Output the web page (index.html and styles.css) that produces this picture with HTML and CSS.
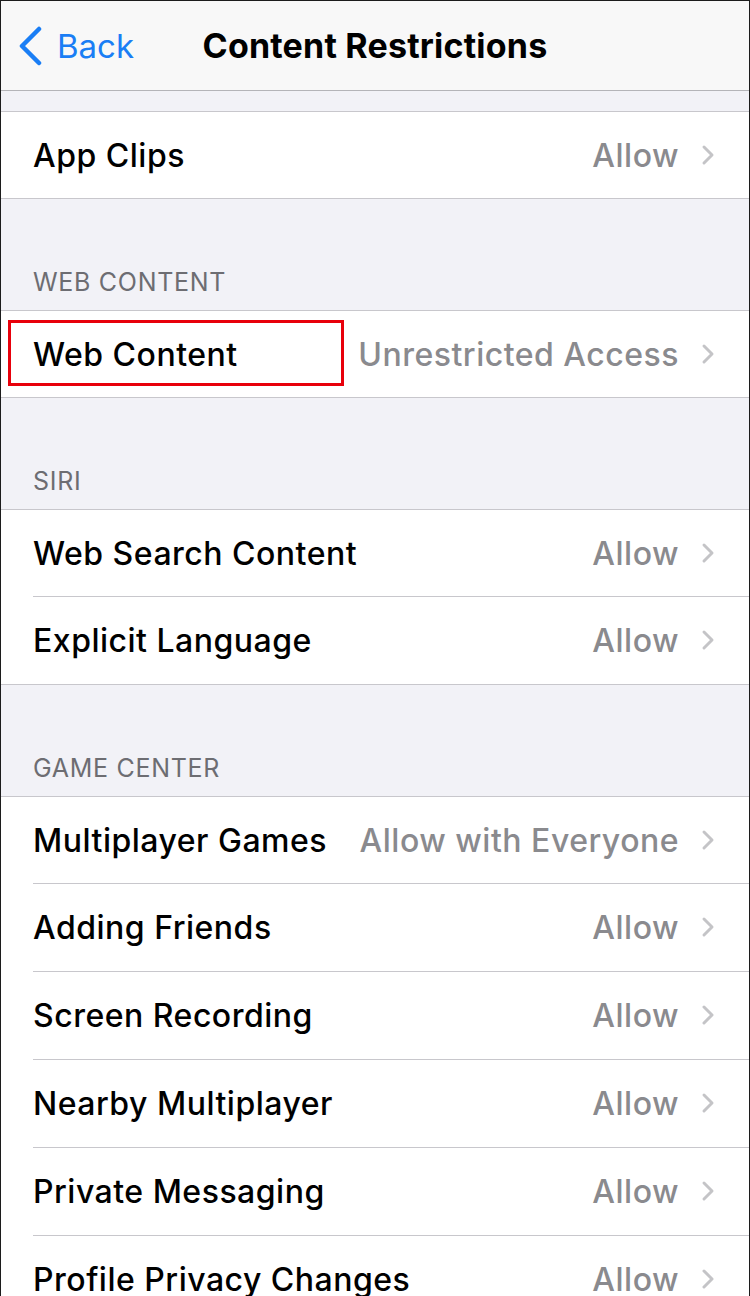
FILE: index.html
```html
<!DOCTYPE html>
<html lang="en">
<head>
    <meta charset="UTF-8">
    <meta name="viewport" content="width=device-width, initial-scale=1.0">
    <title>Content Restrictions</title>
    <link rel="stylesheet" href="styles.css">
</head>
<body>
    <div class="screen">
        <header class="navbar">
            <a class="back">
                <svg class="back-icon" width="26" height="40" viewBox="0 0 26 40">
                    <path d="M22 3 L5 20 L22 37" fill="none" stroke="#1a7ef5" stroke-width="4.5" stroke-linecap="round" stroke-linejoin="round"/>
                </svg>
                <span>Back</span>
            </a>
            <h1>Content Restrictions</h1>
        </header>

        <div class="spacer"></div>
        <div class="group">
            <div class="row">
                <span class="label">App Clips</span>
                <span class="value">Allow</span>
                <svg class="chev" width="14" height="22" viewBox="0 0 14 22"><path d="M3 3 L11 11 L3 19" fill="none" stroke="#c4c4c7" stroke-width="3" stroke-linecap="round" stroke-linejoin="round"/></svg>
            </div>
        </div>

        <div class="section-title">WEB CONTENT</div>
        <div class="group">
            <div class="row">
                <span class="label">Web Content</span>
                <span class="value">Unrestricted Access</span>
                <svg class="chev" width="14" height="22" viewBox="0 0 14 22"><path d="M3 3 L11 11 L3 19" fill="none" stroke="#c4c4c7" stroke-width="3" stroke-linecap="round" stroke-linejoin="round"/></svg>
                <div class="highlight"></div>
            </div>
        </div>

        <div class="section-title">SIRI</div>
        <div class="group">
            <div class="row">
                <span class="label">Web Search Content</span>
                <span class="value">Allow</span>
                <svg class="chev" width="14" height="22" viewBox="0 0 14 22"><path d="M3 3 L11 11 L3 19" fill="none" stroke="#c4c4c7" stroke-width="3" stroke-linecap="round" stroke-linejoin="round"/></svg>
            </div>
            <div class="row">
                <span class="label">Explicit Language</span>
                <span class="value">Allow</span>
                <svg class="chev" width="14" height="22" viewBox="0 0 14 22"><path d="M3 3 L11 11 L3 19" fill="none" stroke="#c4c4c7" stroke-width="3" stroke-linecap="round" stroke-linejoin="round"/></svg>
            </div>
        </div>

        <div class="section-title">GAME CENTER</div>
        <div class="group">
            <div class="row">
                <span class="label">Multiplayer Games</span>
                <span class="value">Allow with Everyone</span>
                <svg class="chev" width="14" height="22" viewBox="0 0 14 22"><path d="M3 3 L11 11 L3 19" fill="none" stroke="#c4c4c7" stroke-width="3" stroke-linecap="round" stroke-linejoin="round"/></svg>
            </div>
            <div class="row">
                <span class="label">Adding Friends</span>
                <span class="value">Allow</span>
                <svg class="chev" width="14" height="22" viewBox="0 0 14 22"><path d="M3 3 L11 11 L3 19" fill="none" stroke="#c4c4c7" stroke-width="3" stroke-linecap="round" stroke-linejoin="round"/></svg>
            </div>
            <div class="row">
                <span class="label">Screen Recording</span>
                <span class="value">Allow</span>
                <svg class="chev" width="14" height="22" viewBox="0 0 14 22"><path d="M3 3 L11 11 L3 19" fill="none" stroke="#c4c4c7" stroke-width="3" stroke-linecap="round" stroke-linejoin="round"/></svg>
            </div>
            <div class="row">
                <span class="label">Nearby Multiplayer</span>
                <span class="value">Allow</span>
                <svg class="chev" width="14" height="22" viewBox="0 0 14 22"><path d="M3 3 L11 11 L3 19" fill="none" stroke="#c4c4c7" stroke-width="3" stroke-linecap="round" stroke-linejoin="round"/></svg>
            </div>
            <div class="row">
                <span class="label">Private Messaging</span>
                <span class="value">Allow</span>
                <svg class="chev" width="14" height="22" viewBox="0 0 14 22"><path d="M3 3 L11 11 L3 19" fill="none" stroke="#c4c4c7" stroke-width="3" stroke-linecap="round" stroke-linejoin="round"/></svg>
            </div>
            <div class="row">
                <span class="label">Profile Privacy Changes</span>
                <span class="value">Allow</span>
                <svg class="chev" width="14" height="22" viewBox="0 0 14 22"><path d="M3 3 L11 11 L3 19" fill="none" stroke="#c4c4c7" stroke-width="3" stroke-linecap="round" stroke-linejoin="round"/></svg>
            </div>
        </div>
    </div>
</body>
</html>
```

FILE: styles.css
```css
* {
    box-sizing: border-box;
}

body {
    margin: 0;
    padding: 0;
    font-family: 'Inter', 'Roboto', sans-serif;
    background-color: #fff;
}

.screen {
    width: 750px;
    height: 1296px;
    overflow: hidden;
    background-color: #f2f2f7;
    border: 1px solid #1c1c1c;
    border-bottom: none;
}

.navbar {
    height: 90px;
    background-color: #f8f8f8;
    border-bottom: 1px solid #b4b4b8;
    display: flex;
    align-items: center;
    justify-content: center;
    position: relative;
}

.back {
    position: absolute;
    left: 16px;
    top: 25px;
    display: flex;
    align-items: center;
    gap: 14px;
    color: #1a7ef5;
    font-size: 33px;
}

.navbar h1 {
    margin: 0;
    font-size: 34px;
    font-weight: 700;
    color: #000;
    letter-spacing: 0.2px;
}

.spacer {
    height: 20px;
}

.group {
    background-color: #fff;
    border-top: 1px solid #c8c7cc;
    border-bottom: 1px solid #c8c7cc;
}

.row {
    position: relative;
    height: 88px;
    display: flex;
    align-items: center;
    padding: 0 34px 0 32px;
}

.row + .row::before {
    content: "";
    position: absolute;
    top: 0;
    left: 32px;
    right: 0;
    border-top: 1px solid #c8c7cc;
}

.group .row:first-child {
    height: 86px;
}

.label {
    flex: 1;
    font-size: 32px;
    font-weight: 500;
    color: #000;
    letter-spacing: 0.5px;
}

.value {
    font-size: 32px;
    font-weight: 500;
    color: #8a8a8e;
    letter-spacing: 0.5px;
    margin-right: 22px;
}

.chev {
    display: block;
}

.section-title {
    height: 111px;
    display: flex;
    align-items: flex-end;
    padding: 0 0 13px 32px;
    font-size: 25px;
    color: #6d6d72;
    letter-spacing: 0.7px;
}

.highlight {
    position: absolute;
    left: 7px;
    top: 9px;
    width: 336px;
    height: 66px;
    border: 3px solid #e8000b;
}
```
